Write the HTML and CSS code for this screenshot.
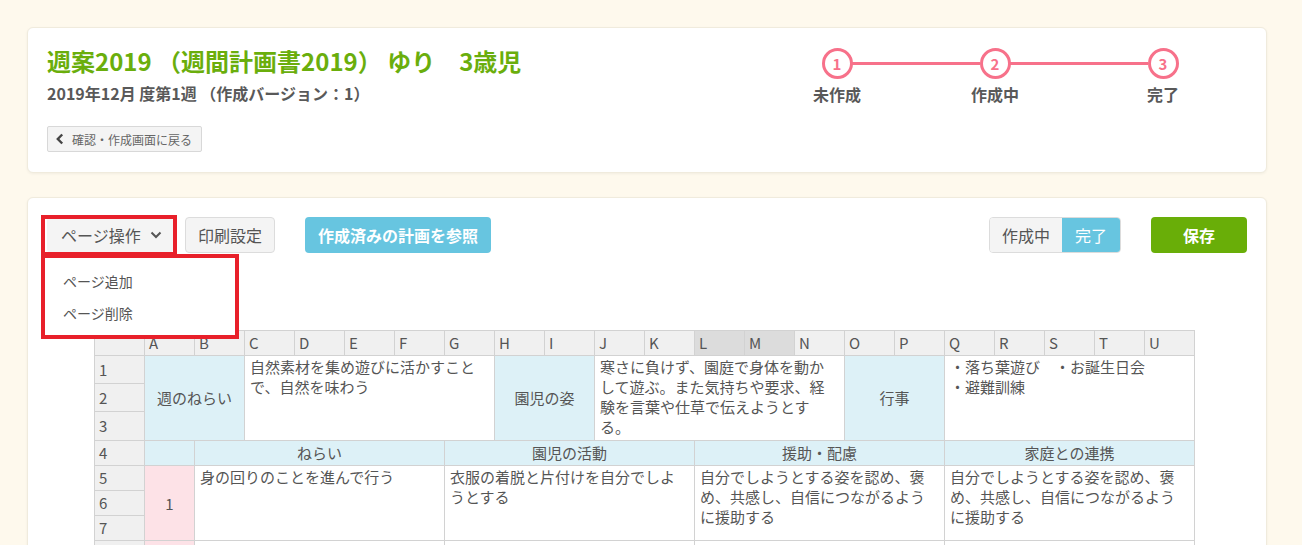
FILE: index.html
```html
<!DOCTYPE html>
<html lang="ja">
<head>
<meta charset="utf-8">
<title>週案2019</title>
<link rel="stylesheet" href="styles.css">
</head>
<body>
<div class="page">
  <section class="card head-card">
    <div class="head-left">
      <h1 class="title">週案2019 （週間計画書2019） ゆり　3歳児</h1>
      <p class="subtitle">2019年12月 度第1週 （作成バージョン：1）</p>
      <button class="back-btn"><svg class="back-icon" width="8" height="12" viewBox="0 0 8 12"><polyline points="6.2,1.5 1.8,6 6.2,10.5" fill="none" stroke="#444" stroke-width="2.4"/></svg>確認・作成画面に戻る</button>
    </div>
    <div class="steps">
      <div class="step"><span class="step-circle">1</span><span class="step-label">未作成</span></div>
      <span class="step-line line-a"></span>
      <div class="step"><span class="step-circle">2</span><span class="step-label">作成中</span></div>
      <span class="step-line line-b"></span>
      <div class="step"><span class="step-circle">3</span><span class="step-label">完了</span></div>
    </div>
  </section>

  <section class="card sheet-card">
    <div class="toolbar">
      <div class="menu-wrap">
        <button class="btn btn-gray btn-pageops">ページ操作<svg class="caret" width="12" height="8" viewBox="0 0 12 8"><polyline points="1.5,1.5 6,6 10.5,1.5" fill="none" stroke="#555" stroke-width="2"/></svg></button>
        <span class="mark mark-btn"></span>
        <div class="menu">
          <div class="menu-item">ページ追加</div>
          <div class="menu-item">ページ削除</div>
        </div>
      </div>
      <button class="btn btn-gray btn-print">印刷設定</button>
      <button class="btn btn-blue">作成済みの計画を参照</button>
      <div class="spacer"></div>
      <div class="toggle"><span class="tg tg-off">作成中</span><span class="tg tg-on">完了</span></div>
      <button class="btn btn-green">保存</button>
    </div>

    <table class="sheet">
      <colgroup>
        <col><col><col><col><col><col><col><col><col><col><col><col><col><col><col><col><col><col><col><col><col><col>
      </colgroup>
      <tr class="r-head">
        <th class="corner"></th>
        <th>A</th><th>B</th><th>C</th><th>D</th><th>E</th><th>F</th><th>G</th><th>H</th><th>I</th><th>J</th><th>K</th>
        <th class="sel">L</th><th class="sel">M</th><th>N</th><th>O</th><th>P</th><th>Q</th><th>R</th><th>S</th><th>T</th><th>U</th>
      </tr>
      <tr class="r-28">
        <th class="rh">1</th>
        <td class="lbl" colspan="2" rowspan="3">週のねらい</td>
        <td class="txt" colspan="5" rowspan="3">自然素材を集め遊びに活かすことで、自然を味わう</td>
        <td class="lbl" colspan="2" rowspan="3">園児の姿</td>
        <td class="txt" colspan="5" rowspan="3">寒さに負けず、園庭で身体を動かして遊ぶ。また気持ちや要求、経験を言葉や仕草で伝えようとする。</td>
        <td class="lbl" colspan="2" rowspan="3">行事</td>
        <td class="txt" colspan="5" rowspan="3">・落ち葉遊び　・お誕生日会<br>・避難訓練</td>
      </tr>
      <tr class="r-28"><th class="rh">2</th></tr>
      <tr class="r-29"><th class="rh">3</th></tr>
      <tr class="r-25">
        <th class="rh">4</th>
        <td class="lbl"></td>
        <td class="lbl" colspan="5">ねらい</td>
        <td class="lbl" colspan="5">園児の活動</td>
        <td class="lbl" colspan="5">援助・配慮</td>
        <td class="lbl" colspan="5">家庭との連携</td>
      </tr>
      <tr class="r-25">
        <th class="rh">5</th>
        <td class="num" rowspan="3">1</td>
        <td class="txt" colspan="5" rowspan="3">身の回りのことを進んで行う</td>
        <td class="txt" colspan="5" rowspan="3">衣服の着脱と片付けを自分でしようとする</td>
        <td class="txt" colspan="5" rowspan="3">自分でしようとする姿を認め、褒め、共感し、自信につながるように援助する</td>
        <td class="txt" colspan="5" rowspan="3">自分でしようとする姿を認め、褒め、共感し、自信につながるように援助する</td>
      </tr>
      <tr class="r-25"><th class="rh">6</th></tr>
      <tr class="r-25"><th class="rh">7</th></tr>
      <tr class="r-25">
        <th class="rh"></th>
        <td class="num"></td>
        <td class="txt" colspan="5"></td>
        <td class="txt" colspan="5"></td>
        <td class="txt" colspan="5"></td>
        <td class="txt" colspan="5"></td>
      </tr>
    </table>
  </section>
</div>
</body>
</html>
```

FILE: styles.css
```css
* { box-sizing: border-box; }
html, body { overflow: hidden; }
body {
  margin: 0;
  background: #fef9ed;
  font-family: "Noto Sans CJK JP", "Noto Sans", sans-serif;
  color: #555;
}
.page {
  padding: 27px 35px 0 27px;
}
.card {
  background: #fff;
  border: 1px solid #f0ebdd;
  border-radius: 6px;
  box-shadow: 0 1px 3px rgba(0,0,0,0.05);
  width: 1240px;
}
.head-card {
  display: flex;
  justify-content: space-between;
  align-items: flex-start;
  padding: 17px 20px 20px 19px;
}
.title {
  margin: 0;
  font-size: 24px;
  line-height: 32px;
  font-weight: 700;
  color: #6aae0c;
}
.subtitle {
  margin: 6px 0 0;
  font-size: 16px;
  line-height: 21px;
  font-weight: 700;
  color: #595959;
}
.back-btn {
  margin-top: 22px;
  display: flex;
  align-items: center;
  height: 26px;
  width: 155px;
  padding: 0 0 0 8px;
  background: #f4f4f4;
  border: 1px solid #d8d8d8;
  border-radius: 2px;
  font-family: inherit;
  font-size: 12px;
  color: #666;
}
.back-icon { margin-right: 8px; }

.steps {
  display: flex;
  align-items: flex-start;
  margin: 3px 68px 0 0;
}
.step {
  width: 30px;
  display: flex;
  flex-direction: column;
  align-items: center;
}
.step-circle {
  width: 31px;
  height: 31px;
  flex: none;
  border: 3px solid #f7718a;
  border-radius: 50%;
  display: flex;
  align-items: center;
  justify-content: center;
  font-size: 15px;
  font-weight: 700;
  color: #f7718a;
  line-height: 1;
}
.step-label {
  margin-top: 4px;
  white-space: nowrap;
  font-size: 16px;
  line-height: 22px;
  font-weight: 700;
  color: #595959;
}
.step-line {
  height: 3px;
  background: #f7718a;
  margin-top: 14px;
}
.line-a { width: 128px; }
.line-b { width: 138px; }

.sheet-card {
  margin-top: 24px;
  padding: 19px 19px 40px;
  height: 400px;
}
.toolbar {
  display: flex;
  align-items: center;
  height: 36px;
}
.menu-wrap {
  position: relative;
  width: 126px;
  height: 36px;
  margin-right: 12px;
}
.btn {
  height: 36px;
  border-radius: 4px;
  font-family: inherit;
  font-size: 16px;
  padding: 0;
}
.btn-gray {
  background: #f4f4f4;
  border: 1px solid #dcdcdc;
  color: #555;
}
.btn-pageops {
  width: 126px;
  display: flex;
  align-items: center;
  padding-left: 13px;
  border-color: #f4f4f4;
}
.caret { margin-left: 9px; }
.btn-print { width: 90px; margin-right: 30px; }
.btn-blue {
  width: 186px;
  background: #67c5e0;
  border: none;
  color: #fff;
  font-weight: 700;
}
.spacer { flex: 1; }
.toggle {
  display: flex;
  height: 36px;
  border: 1px solid #dcdcdc;
  border-radius: 4px;
  overflow: hidden;
  margin-right: 30px;
}
.tg {
  display: flex;
  align-items: center;
  justify-content: center;
  font-size: 16px;
}
.tg-off { width: 72px; background: #f4f4f4; color: #555; }
.tg-on { width: 58px; background: #67c5e0; color: #fff; }
.btn-green {
  width: 96px;
  background: #69ae08;
  border: none;
  color: #fff;
  font-weight: 700;
}

.mark {
  position: absolute;
  border: 4px solid #e8202a;
  pointer-events: none;
}
.mark-btn {
  left: -6px;
  top: -2px;
  width: 136px;
  height: 41px;
}
.menu {
  position: absolute;
  z-index: 5;
  left: -6px;
  top: 37px;
  width: 198px;
  height: 85px;
  background: #fff;
  border: 4px solid #e8202a;
  padding: 7px 0 0 18px;
}
.menu-item {
  font-size: 14px;
  line-height: 32px;
  color: #555;
}

.sheet {
  margin: 77px 0 0 47px;
  width: 1100px;
  table-layout: fixed;
  border-collapse: collapse;
  font-size: 15px;
  color: #555;
}
.sheet col { width: 50px; }
.sheet th, .sheet td {
  border: 1px solid #d2d2d2;
  padding: 0;
  overflow: hidden;
}
.sheet th {
  background: #f0f0f0;
  font-weight: 400;
  text-align: left;
  padding-left: 4px;
  line-height: 20px;
}
.sheet th.sel { background: #dcdcdc; }
.sheet th.rh { vertical-align: middle; }
.r-head { height: 25px; }
.r-28 { height: 28px; }
.r-29 { height: 29px; }
.r-25 { height: 25px; }
.lbl {
  background: #ddf1f7;
  text-align: center;
  vertical-align: middle;
  line-height: 20px;
}
.txt {
  background: #fff;
  vertical-align: top;
  line-height: 20px;
  padding: 1px 6px 0 5px !important;
}
.num {
  background: #fde2e7;
  text-align: center;
  vertical-align: middle;
}
```
